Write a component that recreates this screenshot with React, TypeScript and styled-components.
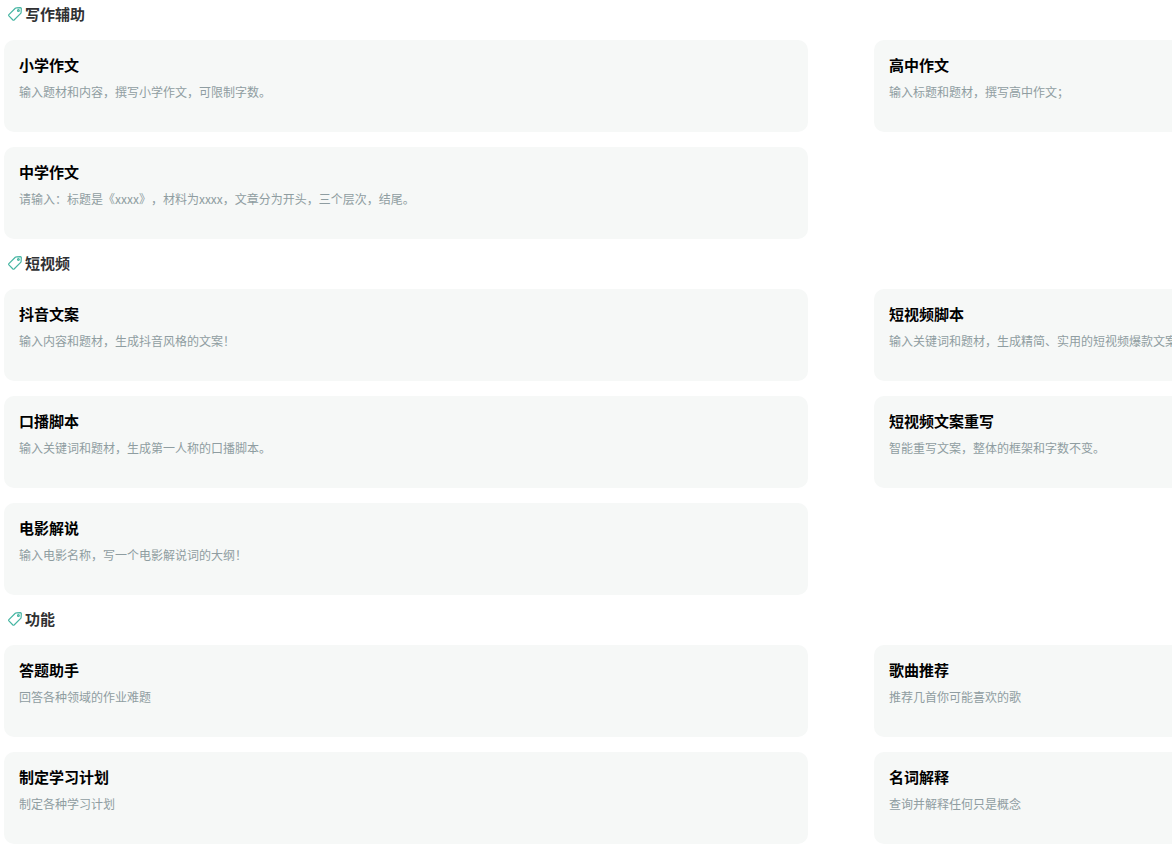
import React from "react";
import styled, { createGlobalStyle } from "styled-components";

const GlobalStyle = createGlobalStyle`
  * { box-sizing: border-box; }
  body {
    margin: 0;
    background: #fff;
    font-family: "Noto Sans CJK SC", "Liberation Sans", sans-serif;
    text-spacing-trim: space-all;
    overflow-x: hidden;
  }
`;

const Page = styled.main`
  padding-left: 4px;
  padding-bottom: 6px;
  overflow: hidden;
`;

const Section = styled.section`
  display: block;
`;

const SectionTitle = styled.h2`
  display: flex;
  align-items: center;
  gap: 3px;
  height: 20px;
  margin: 0;
  padding-left: 4px;
  font-size: 15px;
  line-height: 20px;
  font-weight: 700;
  color: #303133;

  ${Section} > & {
    margin: 4px 0 16px;
  }

  ${Section} + ${Section} > & {
    margin: 14px 0 16px;
  }
`;

const TagSvg = styled.svg`
  width: 14px;
  height: 14px;
  fill: none;
  stroke: #45b5a2;
  stroke-width: 1.2;
  stroke-linejoin: round;
`;

function TagIcon() {
  return (
    <TagSvg viewBox="0 0 14 14" aria-hidden="true">
      <path d="M8.3 0.9 L12.4 0.7 Q13.3 0.7 13.3 1.6 L13.1 5.5 Q13.1 6 12.7 6.4 L6.1 13 Q5.5 13.5 4.9 13 L0.9 8.8 Q0.4 8.2 0.9 7.6 L7.3 1.3 Q7.7 0.9 8.3 0.9 Z" />
      <circle cx="10.4" cy="3.5" r="0.9" />
    </TagSvg>
  );
}

const CardGrid = styled.div`
  display: grid;
  grid-template-columns: repeat(2, calc(50% + 220px));
  gap: 15px 66px;
`;

const Card = styled.article`
  min-height: 92px;
  padding: 15px;
  border-radius: 10px;
  background: #f6f8f7;
`;

const CardTitle = styled.h3`
  margin: 0 0 8px;
  font-size: 15px;
  line-height: 20px;
  font-weight: 700;
  color: #000;
`;

const CardText = styled.p`
  margin: 0;
  font-size: 12px;
  line-height: 18px;
  color: #8f9da1;
  white-space: nowrap;
`;

interface Item {
  title: string;
  text: string;
}

const sections: { name: string; items: Item[] }[] = [
  {
    name: "写作辅助",
    items: [
      { title: "小学作文", text: "输入题材和内容，撰写小学作文，可限制字数。" },
      { title: "高中作文", text: "输入标题和题材，撰写高中作文；" },
      { title: "中学作文", text: "请输入：标题是《xxxx》，材料为xxxx，文章分为开头，三个层次，结尾。" },
    ],
  },
  {
    name: "短视频",
    items: [
      { title: "抖音文案", text: "输入内容和题材，生成抖音风格的文案！" },
      { title: "短视频脚本", text: "输入关键词和题材，生成精简、实用的短视频爆款文案" },
      { title: "口播脚本", text: "输入关键词和题材，生成第一人称的口播脚本。" },
      { title: "短视频文案重写", text: "智能重写文案，整体的框架和字数不变。" },
      { title: "电影解说", text: "输入电影名称，写一个电影解说词的大纲！" },
    ],
  },
  {
    name: "功能",
    items: [
      { title: "答题助手", text: "回答各种领域的作业难题" },
      { title: "歌曲推荐", text: "推荐几首你可能喜欢的歌" },
      { title: "制定学习计划", text: "制定各种学习计划" },
      { title: "名词解释", text: "查询并解释任何只是概念" },
    ],
  },
];

export default function App() {
  return (
    <>
      <GlobalStyle />
      <Page lang="zh-CN">
        {sections.map((section) => (
          <Section key={section.name}>
            <SectionTitle>
              <TagIcon />
              {section.name}
            </SectionTitle>
            <CardGrid>
              {section.items.map((item) => (
                <Card key={item.title}>
                  <CardTitle>{item.title}</CardTitle>
                  <CardText>{item.text}</CardText>
                </Card>
              ))}
            </CardGrid>
          </Section>
        ))}
      </Page>
    </>
  );
}
